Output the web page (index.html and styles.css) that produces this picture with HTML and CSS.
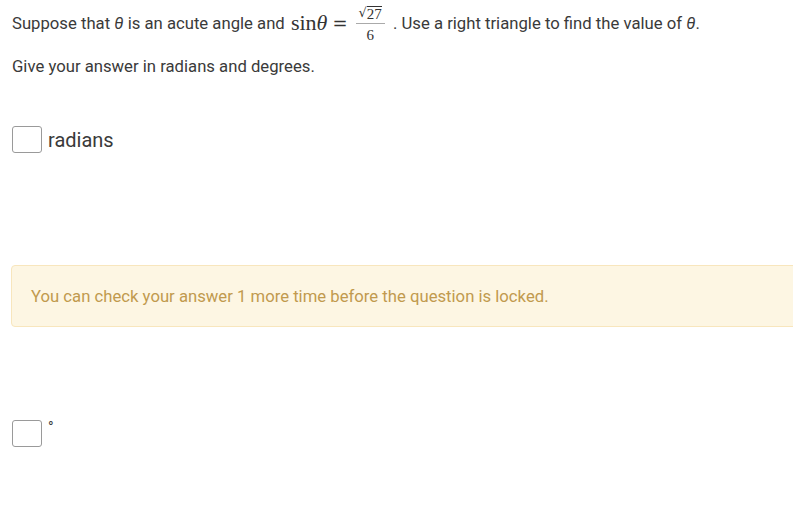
FILE: index.html
```html
<!DOCTYPE html>
<html>
<head>
<meta charset="utf-8">
<link rel="stylesheet" href="styles.css">
</head>
<body>
<div class="page">
  <p class="question">Suppose that <span class="var">θ</span> is an acute angle and <span class="math"><span class="fn">sin</span><span class="mi">θ</span><span class="eq">=</span><span class="frac"><span class="num"><span class="radic">√</span><span class="radicand">27</span></span><span class="den">6</span></span></span> . Use a right triangle to find the value of <span class="var">θ</span>.</p>
  <p class="instr">Give your answer in radians and degrees.</p>
  <div class="answer answer-rad">
    <span class="box"></span><span class="unit">radians</span>
  </div>
  <div class="alert">You can check your answer 1 more time before the question is locked.</div>
  <div class="answer answer-deg">
    <span class="box"></span><span class="deg">°</span>
  </div>
</div>
</body>
</html>
```

FILE: styles.css
```css
html, body {
  margin: 0;
  padding: 0;
  background: #fff;
}
.page {
  padding: 0 0 0 12px;
  font-family: Roboto, "Liberation Sans", sans-serif;
  font-size: 16.7px;
  color: #3a3a3a;
  overflow: hidden;
  width: 781px;
}
.question {
  margin: 0;
  padding-top: 4px;
  height: 38px;
  display: flex;
  align-items: center;
  white-space: pre;
}
.var {
  font-style: italic;
}
.math {
  display: inline-flex;
  align-items: center;
  color: #333;
  margin-left: 2px;
}
.fn {
  font-family: "Liberation Serif", serif;
  font-size: 22px;
}
.mi {
  font-family: "Liberation Serif", serif;
  font-style: italic;
  font-size: 22px;
}
.eq {
  margin: 0 8px 0 5px;
  font-family: "DejaVu Serif", serif;
  font-size: 18px;
}
.frac {
  display: inline-flex;
  flex-direction: column;
  align-items: center;
  font-family: "Liberation Serif", serif;
  font-size: 15px;
  line-height: 16px;
  margin-right: 4px;
  margin-top: 1px;
}
.num {
  display: flex;
  align-items: flex-end;
  padding: 0 3px 2px;
  border-bottom: 1px solid #aaa;
}
.radic {
  font-family: "DejaVu Sans", sans-serif;
  font-size: 13px;
}
.radicand {
  border-top: 1px solid #333;
  line-height: 14px;
}
.den {
  padding-top: 3px;
}
.instr {
  margin: 15px 0 0 0;
  line-height: 20px;
}
.answer {
  display: flex;
  align-items: center;
}
.answer-rad {
  margin-top: 49px;
}
.box {
  display: inline-block;
  width: 28px;
  height: 25px;
  border: 1px solid #9a9a9a;
  border-radius: 3px;
  background: #fff;
}
.unit {
  margin-left: 6px;
  font-size: 20px;
}
.alert {
  margin: 112px -30px 0 -1px;
  height: 62px;
  box-sizing: border-box;
  padding-left: 19px;
  display: flex;
  align-items: center;
  background: #fdf6e3;
  border: 1px solid #f8e6bd;
  border-radius: 4px;
  color: #c19a4e;
}
.answer-deg {
  margin-top: 93px;
  align-items: flex-start;
}
.deg {
  margin-left: 6px;
  font-size: 15px;
  line-height: 15px;
  margin-top: 0;
}
```
